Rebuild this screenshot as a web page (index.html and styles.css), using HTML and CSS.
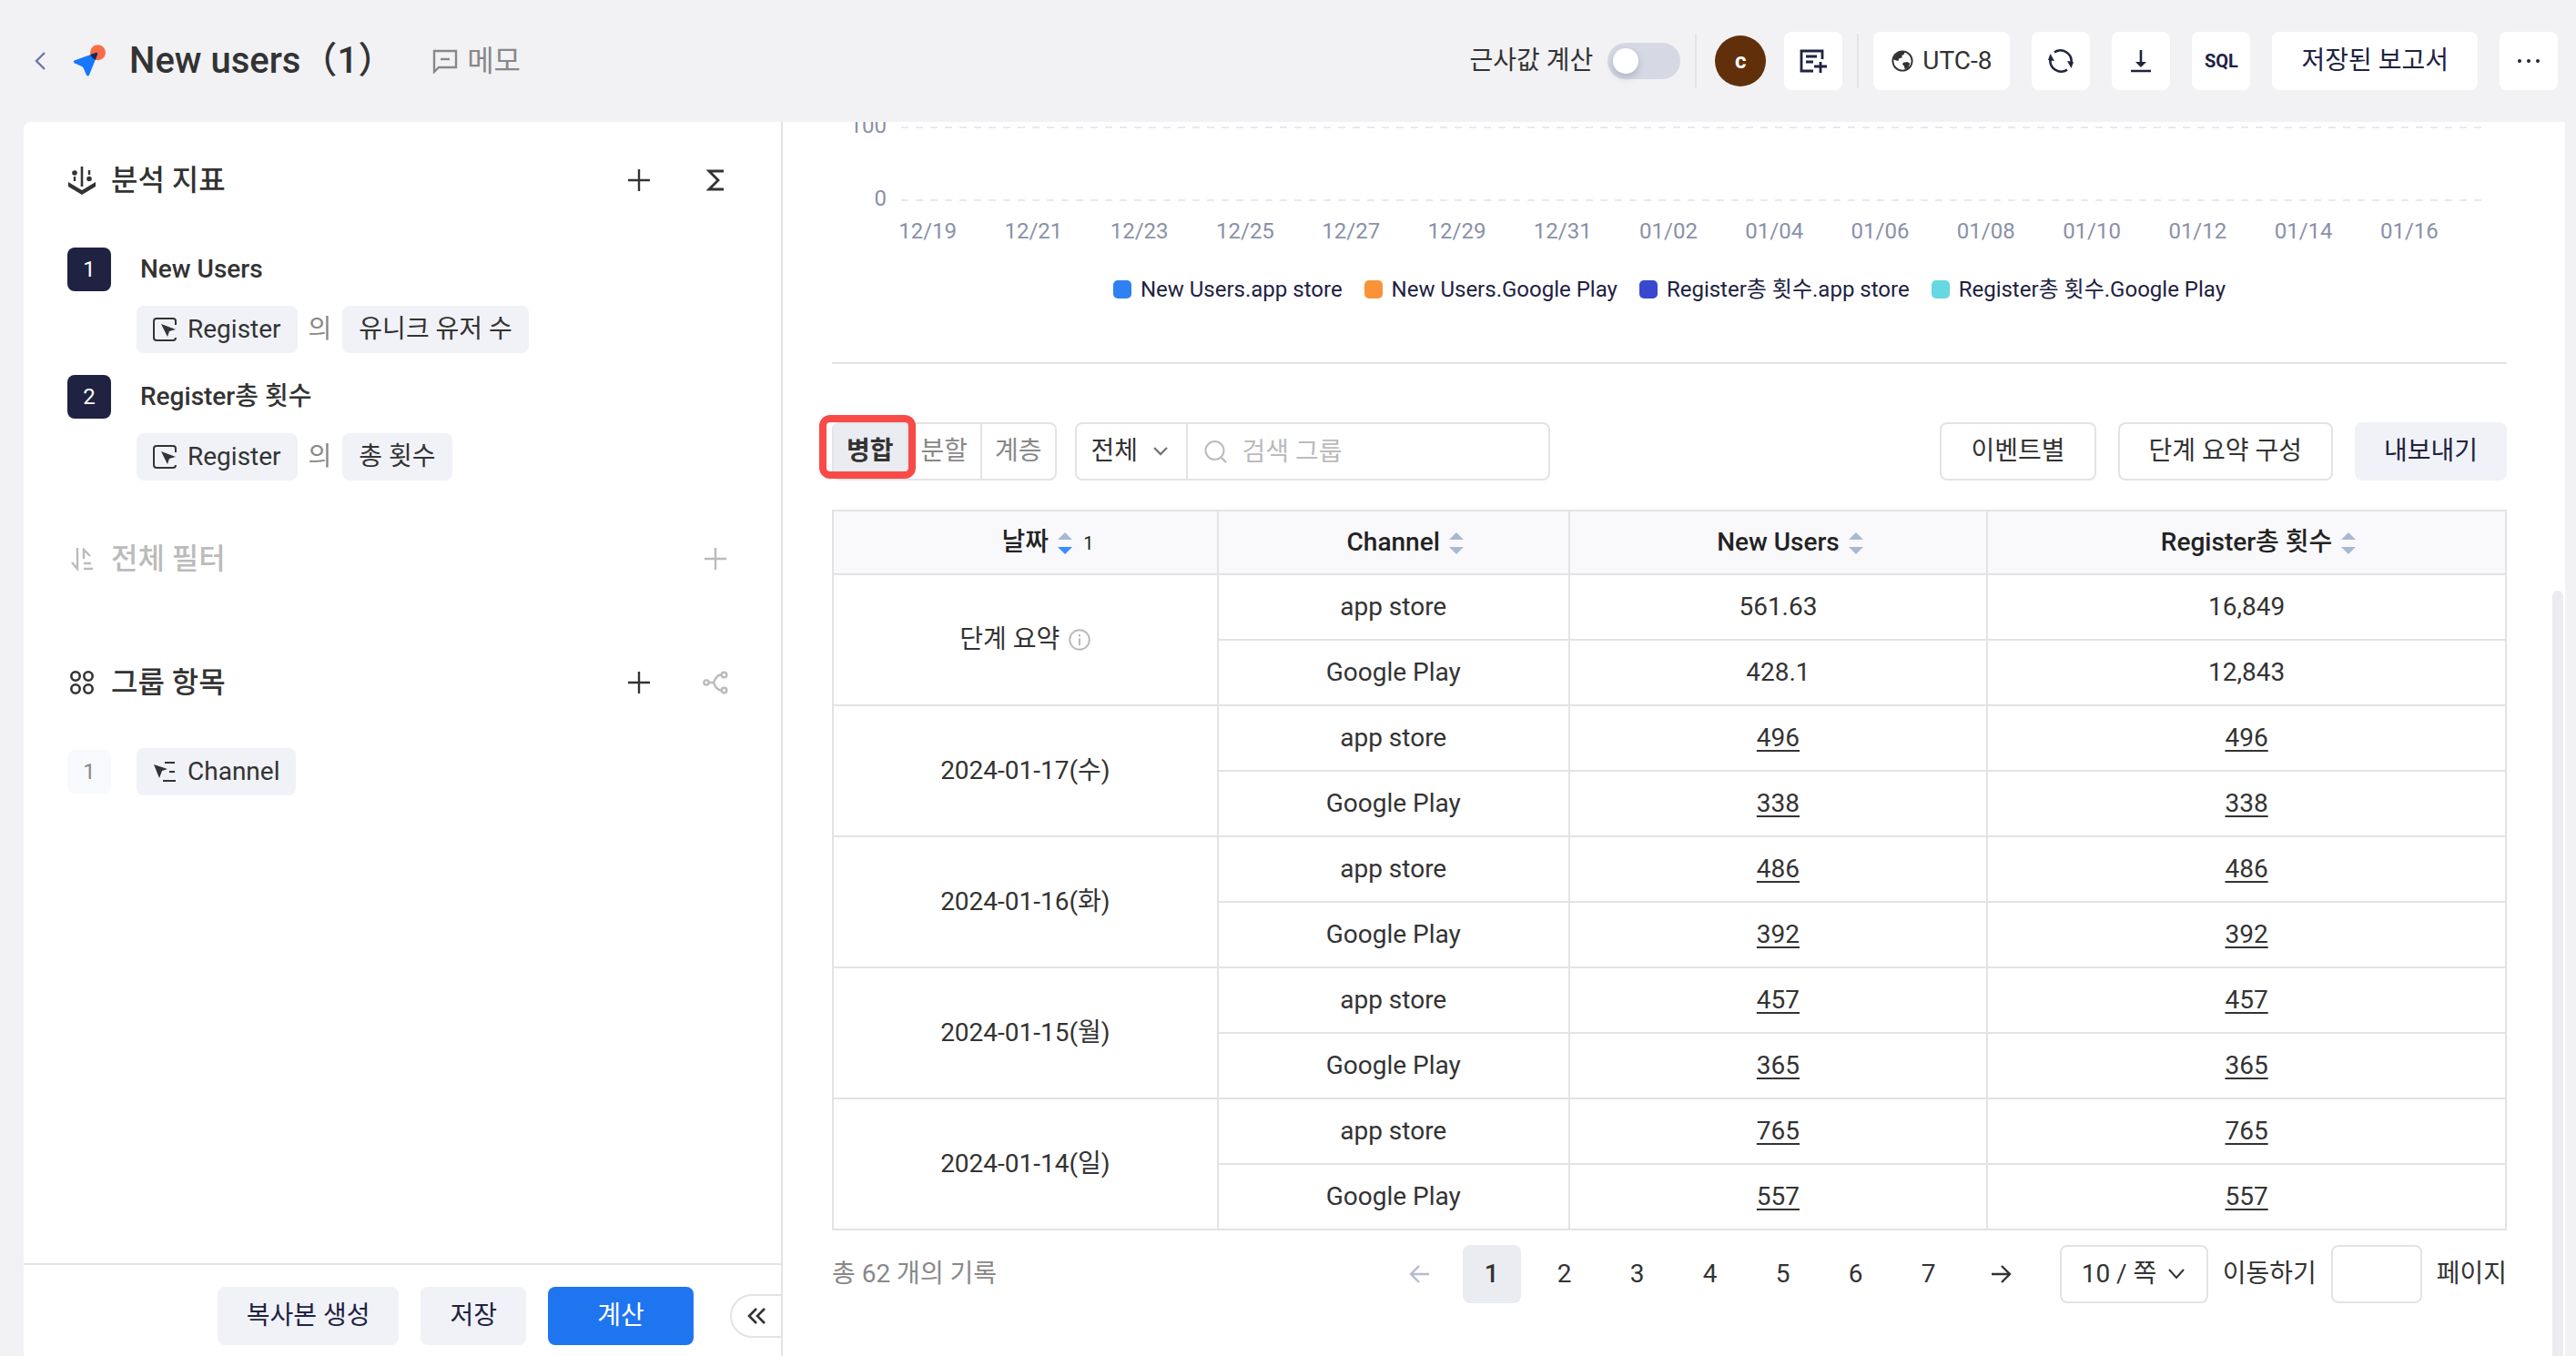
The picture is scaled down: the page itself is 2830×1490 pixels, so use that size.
FILE: index.html
```html
<!DOCTYPE html>
<html lang="ko">
  <head>
    <meta charset="UTF-8" />
    <meta name="viewport" content="width=device-width, initial-scale=1.0" />
    <title>New users（1）</title>
    <link rel="stylesheet" href="styles.css">
  </head>
  <body>
    <header class="topbar">
      <a class="back" href="#" aria-label="뒤로">
        <svg width="12" height="20" viewBox="0 0 12 20"><path d="M11 1 2 10l9 9" fill="none" stroke="#6c76a8" stroke-width="2.400"/></svg>
      </a>
      <svg class="logo" width="38" height="38" viewBox="0 0 38 38">
        <circle cx="27.500" cy="9.700" r="8.500" fill="#f76d47"/>
        <path d="M1.500 18.600 25.300 9.900Q27.700 9.500 27 12L18 34.500Q16.500 36.700 15 34.500L11.500 26.500Q11 25.500 10 25L1.500 21.200Q0 19.800 1.500 18.600z" fill="#1677ff"/>
        <path d="M19.400 12 25.300 9.900Q27.700 9.500 27 12L24.800 17.700Q21 16.300 19.400 12z" fill="#1b2a4e"/>
      </svg>
      <h1>New users（1）</h1>
      <button class="memo" type="button">
        <svg width="28" height="28" viewBox="0 0 28 28"><path d="M2 26V3h24v18H7z" fill="none" stroke="currentColor" stroke-width="2.400"/><path d="M9 12h10" stroke="currentColor" stroke-width="2.400"/></svg>
        메모
      </button>

      <div class="topbar-actions">
        <label class="switch">근사값 계산 <input type="checkbox" /></label>
        <span class="divider"></span>
        <span class="avatar">c</span>
        <button class="btn btn-white btn-icon" type="button" aria-label="대시보드에 추가">
          <svg width="32" height="28" viewBox="0 0 32 28"><path d="M26 12V3H3v22h13M8 9h12M8 15h8M24 15v12M17 20h14" fill="none" stroke="currentColor" stroke-width="2.800"/></svg>
        </button>
        <span class="divider"></span>
        <button class="btn btn-white timezone" type="button">
          <svg width="24" height="24" viewBox="0 0 26 26"><circle cx="13" cy="13" r="11.500" fill="none" stroke="currentColor" stroke-width="2"/><path d="M5 6 9 2.500l7-.5-1 3-3 2 1 2-4 1-1 3-4-1-2-2zM14 15l5-1 3 2-2 5-4 2-1-4-2-2z" fill="currentColor"/></svg>
          UTC-8
        </button>
        <div class="button-row">
          <button class="btn btn-white btn-icon" type="button" aria-label="새로 고침">
            <svg width="28" height="28" viewBox="0 0 28 28"><path d="M7 4.400A12 12 0 0 1 25.500 16M21 23.600A12 12 0 0 1 2.500 12" fill="none" stroke="currentColor" stroke-width="2.600"/><path d="m21 14 7 1-2.500 7zM7 14l-7-1 2.500-7z" fill="currentColor"/></svg>
          </button>
          <button class="btn btn-white btn-icon" type="button" aria-label="다운로드">
            <svg width="24" height="28" viewBox="0 0 24 28"><path d="M12 2v14M1 25h22" fill="none" stroke="currentColor" stroke-width="2.600"/><path d="M6 15h12l-6 6z" fill="currentColor"/></svg>
          </button>
          <button class="btn btn-white btn-icon sql" type="button">SQL</button>
          <button class="btn btn-white" type="button">저장된 보고서</button>
          <button class="btn btn-white btn-icon" type="button" aria-label="더 보기">
            <svg width="26" height="6" viewBox="0 0 26 6"><g fill="currentColor"><circle cx="3" cy="3" r="2"/><circle cx="13" cy="3" r="2"/><circle cx="23" cy="3" r="2"/></g></svg>
          </button>
        </div>
      </div>
    </header>

    <div class="workspace">
      <aside class="sidebar">
        <div class="sidebar-body">
          <section class="metrics">
            <div class="section-head">
              <svg width="32" height="32" viewBox="0 0 32 32"><path d="M16 1v22" stroke="currentColor" stroke-width="2.600"/><path d="M8 12v5M24 5v5" stroke="currentColor" stroke-width="2.400"/><circle cx="8" cy="8" r="2.800" fill="currentColor"/><circle cx="24" cy="14.500" r="2.800" fill="currentColor"/><path d="m1 18 15 9 15-9v5l-15 9-15-9z" fill="currentColor"/></svg>
              <h2>분석 지표</h2>
              <button class="icon-btn" type="button" aria-label="지표 추가">
                <svg width="24" height="24" viewBox="0 0 24 24"><path d="M12 0v24M0 12h24" stroke="currentColor" stroke-width="2.400"/></svg>
              </button>
              <button class="icon-btn" type="button" aria-label="수식 추가">
                <svg width="20" height="24" viewBox="0 0 20 24"><path d="M19 2H3l10 10L3 22h16" fill="none" stroke="currentColor" stroke-width="2.800"/></svg>
              </button>
            </div>
            <div class="metric">
              <span class="badge">1</span>
              <h3>New Users</h3>
              <div class="tags">
                <button class="tag" type="button">
                  <svg width="26" height="26" viewBox="0 0 26 26"><path d="M25 8V4q0-3-3-3H4Q1 1 1 4v18q0 3 3 3h18q3 0 3-3" fill="none" stroke="currentColor" stroke-width="2"/><path d="m9 7 16 6-7 2-2 6z" fill="currentColor"/></svg>
                  Register
                </button>
                <span class="of">의</span>
                <button class="tag" type="button">유니크 유저 수</button>
              </div>
            </div>
            <div class="metric">
              <span class="badge">2</span>
              <h3>Register총 횟수</h3>
              <div class="tags">
                <button class="tag" type="button">
                  <svg width="26" height="26" viewBox="0 0 26 26"><path d="M25 8V4q0-3-3-3H4Q1 1 1 4v18q0 3 3 3h18q3 0 3-3" fill="none" stroke="currentColor" stroke-width="2"/><path d="m9 7 16 6-7 2-2 6z" fill="currentColor"/></svg>
                  Register
                </button>
                <span class="of">의</span>
                <button class="tag" type="button">총 횟수</button>
              </div>
            </div>
          </section>

          <section class="filters">
            <div class="section-head muted">
              <svg width="32" height="28" viewBox="0 0 32 28"><path d="M11 2v23L5 18M18 14V4l7 7M18 19h8M18 25h10" fill="none" stroke="currentColor" stroke-width="2.400"/></svg>
              <h2>전체 필터</h2>
              <button class="icon-btn" type="button" aria-label="필터 추가">
                <svg width="24" height="24" viewBox="0 0 24 24"><path d="M12 0v24M0 12h24" stroke="currentColor" stroke-width="2.400"/></svg>
              </button>
            </div>
          </section>

          <section class="groups">
            <div class="section-head">
              <svg width="32" height="28" viewBox="0 0 32 28"><g fill="none" stroke="currentColor" stroke-width="2.600"><circle cx="9" cy="7" r="4.700"/><circle cx="23" cy="7" r="4.700"/><circle cx="9" cy="21" r="4.700"/><circle cx="23" cy="21" r="4.700"/></g></svg>
              <h2>그룹 항목</h2>
              <button class="icon-btn" type="button" aria-label="그룹 추가">
                <svg width="24" height="24" viewBox="0 0 24 24"><path d="M12 0v24M0 12h24" stroke="currentColor" stroke-width="2.400"/></svg>
              </button>
              <button class="icon-btn muted" type="button" aria-label="그룹 분기">
                <svg width="28" height="26" viewBox="0 0 28 26"><g fill="none" stroke="currentColor" stroke-width="2.400"><circle cx="4" cy="13" r="2.600"/><circle cx="23.500" cy="4.500" r="2.800"/><circle cx="23.500" cy="21.500" r="2.800"/><path d="M7 13h5q3-8.500 8.500-8.500M12 13q3 8.500 8.500 8.500"/></g></svg>
              </button>
            </div>
            <div class="group-row">
              <span class="badge badge-light">1</span>
              <button class="tag" type="button">
                <svg width="26" height="24" viewBox="0 0 26 24"><path d="M13 2h11M18 12h6M11 22h14" stroke="currentColor" stroke-width="2.200"/><path d="m1 4 15 5-6 2-3 8z" fill="currentColor"/></svg>
                Channel
              </button>
            </div>
          </section>
        </div>

        <div class="sidebar-footer">
          <button class="btn btn-soft" type="button">복사본 생성</button>
          <button class="btn btn-soft" type="button">저장</button>
          <button class="btn btn-primary" type="button">계산</button>
          <button class="collapse" type="button" aria-label="패널 접기">
            <svg width="20" height="18" viewBox="0 0 20 18"><path d="m10 1-8 8 8 8M19 1l-8 8 8 8" fill="none" stroke="currentColor" stroke-width="2.600"/></svg>
          </button>
        </div>
      </aside>

      <main class="report">
        <section class="chart">
          <div class="grid-line"><span>100</span><svg height="2"><path d="M0 1h5000"/></svg></div>
          <div class="grid-line"><span>0</span><svg height="2"><path d="M0 1h5000"/></svg></div>
          <ul class="axis">
            <li>12/19</li>
            <li>12/21</li>
            <li>12/23</li>
            <li>12/25</li>
            <li>12/27</li>
            <li>12/29</li>
            <li>12/31</li>
            <li>01/02</li>
            <li>01/04</li>
            <li>01/06</li>
            <li>01/08</li>
            <li>01/10</li>
            <li>01/12</li>
            <li>01/14</li>
            <li>01/16</li>
          </ul>
          <ul class="legend">
            <li class="blue">New Users.app store</li>
            <li class="orange">New Users.Google Play</li>
            <li class="indigo">Register총 횟수.app store</li>
            <li class="cyan">Register총 횟수.Google Play</li>
          </ul>
        </section>

        <div class="toolbar">
          <div class="segmented">
            <button class="active" type="button">병합</button>
            <button type="button">분할</button>
            <button type="button">계층</button>
          </div>
          <div class="search">
            <div class="select-wrap">
              <select aria-label="검색 범위">
                <option>전체</option>
              </select>
              <svg width="16" height="10" viewBox="0 0 16 10"><path d="m1 1 7 7 7-7" fill="none" stroke="#777" stroke-width="2.400"/></svg>
            </div>
            <svg class="search-icon" width="26" height="26" viewBox="0 0 26 26"><circle cx="11.500" cy="12" r="10" fill="none" stroke="#bbb" stroke-width="2"/><path d="m19 20 5 5" stroke="#bbb" stroke-width="2.400"/></svg>
            <input type="text" placeholder="검색 그룹" aria-label="검색 그룹" />
          </div>
          <div class="button-row push">
            <button class="btn btn-outline" type="button">이벤트별</button>
            <button class="btn btn-outline" type="button">단계 요약 구성</button>
            <button class="btn btn-soft" type="button">내보내기</button>
          </div>
        </div>

        <table>
          <colgroup>
            <col class="col-date" />
            <col class="col-channel" />
            <col class="col-users" />
            <col class="col-total" />
          </colgroup>
          <thead>
            <tr>
              <th>날짜<span class="sorter"><svg class="desc" width="16" height="24" viewBox="0 0 16 24"><path d="m8 0 8 8H0z"/><path d="m8 24 8-8H0z"/></svg><small>1</small></span></th>
              <th>Channel<span class="sorter"><svg width="16" height="24" viewBox="0 0 16 24"><path d="m8 0 8 8H0z"/><path d="m8 24 8-8H0z"/></svg></span></th>
              <th>New Users<span class="sorter"><svg width="16" height="24" viewBox="0 0 16 24"><path d="m8 0 8 8H0z"/><path d="m8 24 8-8H0z"/></svg></span></th>
              <th>Register총 횟수<span class="sorter"><svg width="16" height="24" viewBox="0 0 16 24"><path d="m8 0 8 8H0z"/><path d="m8 24 8-8H0z"/></svg></span></th>
            </tr>
          </thead>
          <tbody>
            <tr>
              <td rowspan="2">단계 요약<svg class="info" width="24" height="24" viewBox="0 0 24 24"><circle cx="12" cy="12" r="10.800" fill="none" stroke="#bbb" stroke-width="2"/><path d="M12 6v2.500M12 10.500V18" stroke="#bbb" stroke-width="2"/></svg></td>
              <td>app store</td>
              <td>561.63</td>
              <td>16,849</td>
            </tr>
            <tr>
              <td>Google Play</td>
              <td>428.1</td>
              <td>12,843</td>
            </tr>
            <tr>
              <td rowspan="2">2024-01-17(수)</td>
              <td>app store</td>
              <td><a href="#">496</a></td>
              <td><a href="#">496</a></td>
            </tr>
            <tr>
              <td>Google Play</td>
              <td><a href="#">338</a></td>
              <td><a href="#">338</a></td>
            </tr>
            <tr>
              <td rowspan="2">2024-01-16(화)</td>
              <td>app store</td>
              <td><a href="#">486</a></td>
              <td><a href="#">486</a></td>
            </tr>
            <tr>
              <td>Google Play</td>
              <td><a href="#">392</a></td>
              <td><a href="#">392</a></td>
            </tr>
            <tr>
              <td rowspan="2">2024-01-15(월)</td>
              <td>app store</td>
              <td><a href="#">457</a></td>
              <td><a href="#">457</a></td>
            </tr>
            <tr>
              <td>Google Play</td>
              <td><a href="#">365</a></td>
              <td><a href="#">365</a></td>
            </tr>
            <tr>
              <td rowspan="2">2024-01-14(일)</td>
              <td>app store</td>
              <td><a href="#">765</a></td>
              <td><a href="#">765</a></td>
            </tr>
            <tr>
              <td>Google Play</td>
              <td><a href="#">557</a></td>
              <td><a href="#">557</a></td>
            </tr>
          </tbody>
        </table>

        <div class="pagination">
          <p>총 62 개의 기록</p>
          <nav class="pages">
            <button type="button" disabled aria-label="이전">
              <svg width="22" height="20" viewBox="0 0 22 20"><path d="M22 10H2M11 1l-9 9 9 9" fill="none" stroke="currentColor" stroke-width="2.400"/></svg>
            </button>
            <button class="current" type="button">1</button>
            <button type="button">2</button>
            <button type="button">3</button>
            <button type="button">4</button>
            <button type="button">5</button>
            <button type="button">6</button>
            <button type="button">7</button>
            <button type="button" aria-label="다음">
              <svg width="22" height="20" viewBox="0 0 22 20"><path d="M0 10h20M11 1l9 9-9 9" fill="none" stroke="currentColor" stroke-width="2.400"/></svg>
            </button>
          </nav>
          <div class="jump">
            <div class="select-wrap boxed">
              <select aria-label="페이지 크기">
                <option>10 / 쪽</option>
              </select>
              <svg width="18" height="12" viewBox="0 0 18 12"><path d="m1 1 8 9 8-9" fill="none" stroke="currentColor" stroke-width="2"/></svg>
            </div>
            <label for="page">이동하기</label>
            <input type="text" id="page" />
            <span>페이지</span>
          </div>
        </div>

        <div class="scroll-thumb"></div>
      </main>
    </div>
  </body>
</html>
```

FILE: styles.css
```css
* {
  margin: 0;
  padding: 0;
  box-sizing: border-box;
}

body {
  font-family: Roboto, "Noto Sans CJK KR", sans-serif;
  font-size: 28px;
  line-height: 40px;
  color: #333;
  background: #f2f2f5;
  min-height: 100vh;
  display: flex;
  flex-direction: column;
}

button,
input,
select {
  font: inherit;
  color: inherit;
  background: none;
  border: none;
  outline: none;
}

button {
  cursor: pointer;
}

ul {
  list-style: none;
}

svg {
  flex: none;
}

/* top bar */

.topbar {
  display: flex;
  align-items: center;
  height: 134px;
  padding: 0 20px 0 38px;
}

.back {
  display: flex;
  margin-right: 30px;
}

.logo {
  margin-right: 24px;
}

.topbar h1 {
  font-size: 40px;
  line-height: 56px;
  font-weight: 500;
}

.memo {
  display: flex;
  align-items: center;
  gap: 10px;
  margin-left: 42px;
  font-size: 32px;
  color: #888;
}

.topbar-actions {
  display: flex;
  align-items: center;
  gap: 16px;
  margin-left: auto;
}

.switch {
  display: flex;
  align-items: center;
  gap: 16px;
}

.switch input {
  appearance: none;
  width: 80px;
  height: 40px;
  padding: 6px;
  border-radius: 20px;
  background: #d6d9e3;
}

.switch input::before {
  content: "";
  display: block;
  width: 28px;
  height: 28px;
  border-radius: 50%;
  background: #fff;
  box-shadow: 0 4px 8px rgba(0, 35, 70, 0.2);
}

.switch input:checked {
  background: #1f75f0;
}

.divider {
  width: 2px;
  height: 60px;
  background: #e4e4e8;
}

.avatar {
  width: 56px;
  height: 56px;
  margin: 0 4px;
  border-radius: 50%;
  background: #61300a;
  color: #fff;
  font-size: 24px;
  font-weight: 700;
  line-height: 56px;
  text-align: center;
}

.btn {
  display: flex;
  align-items: center;
  justify-content: center;
  height: 64px;
  padding: 0 32px;
  border-radius: 8px;
}

.btn-white {
  background: #fff;
  color: #202241;
}

.btn-soft {
  background: #f1f2f8;
  color: #202241;
}

.btn-primary {
  min-width: 160px;
  background: #1f75f0;
  color: #fff;
}

.btn-outline {
  border: 2px solid #e3e3e5;
}

.btn-icon {
  width: 64px;
  padding: 0;
}

.timezone {
  gap: 10px;
  padding: 0 20px;
  margin-right: 8px;
  color: #333;
}

.sql {
  font-size: 20px;
  font-weight: 700;
}

.button-row {
  display: flex;
  gap: 24px;
}

.push {
  margin-left: auto;
}

/* layout */

.workspace {
  flex: 1;
  display: flex;
  padding: 0 12px 0 26px;
}

.sidebar {
  flex: 0 0 834px;
  display: flex;
  flex-direction: column;
  background: #fff;
  border-right: 2px solid #e3e3e5;
  border-top-left-radius: 8px;
}

.sidebar-body {
  flex: 1;
  padding: 40px 44px 40px 48px;
}

.section-head {
  display: flex;
  align-items: center;
  height: 48px;
}

.section-head h2 {
  margin: 0 auto 0 16px;
  font-size: 32px;
  font-weight: 500;
}

.icon-btn {
  display: flex;
  align-items: center;
  justify-content: center;
  width: 56px;
  height: 48px;
  margin-left: 28px;
}

.muted {
  color: #bbb;
}

.metrics,
.groups {
  display: flex;
  flex-direction: column;
  gap: 24px;
}

.metrics .section-head,
.groups .section-head {
  margin-bottom: 26px;
}

.filters {
  margin: 62px 0 88px;
}

.metric {
  display: grid;
  grid-template-columns: 48px 1fr;
  align-items: center;
  gap: 16px 28px;
}

.metric h3 {
  margin-left: 4px;
  font-size: 28px;
  font-weight: 500;
}

.tags {
  grid-column: 2;
  display: flex;
  align-items: center;
  gap: 12px;
}

.badge {
  width: 48px;
  height: 48px;
  border-radius: 8px;
  background: #202241;
  color: #fff;
  font-size: 24px;
  line-height: 48px;
  text-align: center;
}

.badge-light {
  background: #f8f9fc;
  color: #888;
}

.tag {
  display: flex;
  align-items: center;
  gap: 12px;
  height: 52px;
  padding: 0 18px;
  border-radius: 8px;
  background: #f1f2f8;
}

.of {
  color: #888;
}

.group-row {
  display: flex;
  align-items: center;
  gap: 28px;
  height: 48px;
}

.sidebar-footer {
  display: flex;
  align-items: center;
  justify-content: flex-end;
  gap: 24px;
  padding: 24px 0 12px;
  border-top: 2px solid #e3e3e5;
}

.collapse {
  display: flex;
  align-items: center;
  justify-content: center;
  width: 56px;
  height: 48px;
  margin-left: 16px;
  border: 2px solid #e3e3e5;
  border-right: none;
  border-radius: 24px 0 0 24px;
}

.report {
  position: relative;
  flex: 1;
  min-width: 0;
  padding: 0 64px 56px 54px;
  background: #fff;
  overflow: hidden;
}

.scroll-thumb {
  position: absolute;
  top: 38%;
  right: 2px;
  bottom: 0;
  width: 12px;
  border-radius: 6px 6px 0 0;
  background: #ebebf0;
}

/* chart, scrolled so that only its foot is visible */

.chart {
  margin-top: -14px;
  padding-bottom: 60px;
  border-bottom: 2px solid #e3e3e5;
  font-size: 24px;
}

.grid-line {
  display: flex;
  align-items: center;
  height: 40px;
  margin-bottom: 40px;
  padding-right: 26px;
  color: #8a91a8;
}

.grid-line span {
  width: 60px;
  margin-right: 16px;
  padding-bottom: 4px;
  text-align: right;
}

.grid-line svg {
  flex: 1;
  min-width: 0;
}

.grid-line path {
  stroke: #e8e9f2;
  stroke-width: 2;
  stroke-dasharray: 8 8;
}

.axis {
  display: flex;
  margin: -46px 49px 0 47px;
  color: #8a91a8;
}

.axis li {
  flex: 1;
  text-align: center;
}

.legend {
  display: flex;
  justify-content: center;
  gap: 24px;
  margin-top: 24px;
  color: #202241;
}

.legend li {
  display: flex;
  align-items: center;
  gap: 10px;
}

.legend li::before {
  content: "";
  width: 20px;
  height: 20px;
  border-radius: 5px;
}

.legend .blue::before {
  background: #2f80f2;
}

.legend .orange::before {
  background: #fa9239;
}

.legend .indigo::before {
  background: #3849d0;
}

.legend .cyan::before {
  background: #65d8e2;
}

/* toolbar */

.toolbar {
  display: flex;
  gap: 20px;
  margin: 64px 0 32px;
}

.segmented {
  display: flex;
  height: 64px;
  border: 2px solid #e3e3e5;
  border-radius: 8px;
  color: #888;
}

.segmented button {
  position: relative;
  padding: 0 14px;
}

.segmented button + button {
  border-left: 2px solid #e3e3e5;
}

.segmented .active {
  background: #ebecf2;
  color: #333;
  font-weight: 700;
}

/* red frame round the active mode */
.segmented .active::after {
  content: "";
  position: absolute;
  z-index: 1;
  inset: -10px -10px 0 -16px;
  border: 8px solid #f84a47;
  border-radius: 12px;
}

.search {
  display: flex;
  align-items: center;
  width: 522px;
  height: 64px;
  border: 2px solid #e3e3e5;
  border-radius: 8px;
}

.search .select-wrap {
  height: 60px;
  border-right: 2px solid #e3e3e5;
}

.select-wrap {
  display: flex;
  align-items: center;
}

.select-wrap select {
  appearance: none;
  height: 60px;
  padding: 0 54px 0 16px;
}

.select-wrap svg {
  margin: 0 20px 0 -38px;
  pointer-events: none;
}

.search-icon {
  margin: 0 16px 0 18px;
}

.search input {
  flex: 1;
  min-width: 0;
  height: 60px;
}

.search input::placeholder {
  color: #bbb;
}

/* table */

table {
  width: 100%;
  table-layout: fixed;
  border-collapse: collapse;
  text-align: center;
}

.col-date {
  width: 23%;
}

.col-channel {
  width: 21%;
}

.col-users {
  width: 25%;
}

.col-total {
  width: 31%;
}

th,
td {
  height: 72px;
  border: 2px solid #e3e3e5;
}

th {
  height: 70px;
  background: #f9f9fc;
  color: #222;
  font-weight: 500;
}

td a {
  color: inherit;
  text-underline-offset: 4px;
}

/* zero width keeps the column title itself centred */
.sorter {
  display: inline-flex;
  align-items: center;
  gap: 12px;
  width: 0;
  height: 24px;
  vertical-align: -4px;
}

.sorter svg {
  margin-left: 10px;
  fill: #a9b9d1;
}

.sorter small {
  font-size: 20px;
  font-weight: 400;
}

.sorter .desc path:last-child {
  fill: #3d8bff;
}

.info {
  margin-left: 10px;
  vertical-align: -3px;
}

/* pagination */

.pagination {
  display: flex;
  align-items: center;
  margin-top: 16px;
}

.pagination p {
  margin-right: auto;
  color: #888;
}

.pages {
  display: flex;
  gap: 16px;
  margin-right: 32px;
}

.pages button {
  display: flex;
  align-items: center;
  justify-content: center;
  width: 64px;
  height: 64px;
  border-radius: 8px;
}

.pages .current {
  background: #ebecf2;
  font-weight: 500;
}

.pages button:disabled {
  color: #b4bad0;
}

.jump {
  display: flex;
  align-items: center;
  gap: 16px;
}

.jump input,
.boxed {
  height: 64px;
  border: 2px solid #e3e3e5;
  border-radius: 8px;
}

.jump input {
  width: 100px;
  padding: 0 12px;
}

.boxed select {
  padding: 0 54px 0 22px;
}

.boxed svg {
  margin: 0 24px 0 -42px;
}
```
